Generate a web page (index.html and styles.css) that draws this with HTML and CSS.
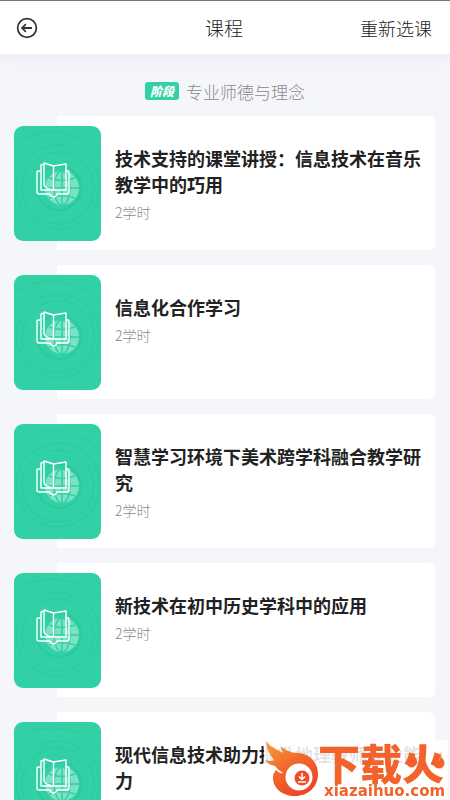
FILE: index.html
```html
<!DOCTYPE html>
<html lang="zh-CN">
<head>
<meta charset="utf-8">
<meta name="viewport" content="width=device-width, initial-scale=1">
<title>课程</title>
<link rel="stylesheet" href="styles.css">
</head>
<body>
<svg class="defs" aria-hidden="true">
  <symbol id="cover" viewBox="0 0 87 115">
    <g fill="none" stroke="#20c49b" stroke-opacity=".45">
      <circle cx="45" cy="62" r="22" stroke-width="2"/>
      <circle cx="44" cy="62" r="36"/>
      <circle cx="44" cy="61" r="42"/>
      <circle cx="38" cy="72" r="66"/>
    </g>
    <circle cx="48" cy="62" r="17" fill="#7be2c4"/>
    <g fill="none" stroke="#35d0a7" stroke-width="1.6">
      <path d="M48 45v34M31 62h34M35 52q13 5 26 0M35 72q13-5 26 0"/>
      <ellipse cx="48" cy="62" rx="8" ry="17"/>
    </g>
    <g fill="none" stroke="#fff" stroke-width="1.4" stroke-linejoin="round" stroke-linecap="round">
      <path d="M26 45h-2q-1 0-1 1v20q0 2 2 2h11q1 3 3.500 3t3.500-3h10q2 0 2-2V46q0-1-1-1h-2"/>
      <path d="M30 38l-3 1v25h25V38l-12.500 2L30 37v22q2 4 9.500 5V40"/>
    </g>
  </symbol>
</svg>
<div class="app">
  <header class="topbar">
    <button class="back" type="button" aria-label="返回">
      <svg viewBox="0 0 20 20" aria-hidden="true"><circle cx="10" cy="10" r="8.500"/><path d="M14.500 10H6M9 6.500L5.500 10L9 13.500"/></svg>
    </button>
    <h1>课程</h1>
    <a class="reselect" href="#">重新选课</a>
  </header>
  <main>
    <h2 class="stage"><span class="badge">阶段</span>专业师德与理念</h2>
    <ul class="courses">
      <li class="course"><svg class="cover" aria-hidden="true"><use href="#cover"/></svg><div class="info"><h3>技术支持的课堂讲授：信息技术在音乐教学中的巧用</h3><p>2学时</p></div></li>
      <li class="course"><svg class="cover" aria-hidden="true"><use href="#cover"/></svg><div class="info"><h3>信息化合作学习</h3><p>2学时</p></div></li>
      <li class="course"><svg class="cover" aria-hidden="true"><use href="#cover"/></svg><div class="info"><h3>智慧学习环境下美术跨学科融合教学研究</h3><p>2学时</p></div></li>
      <li class="course"><svg class="cover" aria-hidden="true"><use href="#cover"/></svg><div class="info"><h3>新技术在初中历史学科中的应用</h3><p>2学时</p></div></li>
      <li class="course"><svg class="cover" aria-hidden="true"><use href="#cover"/></svg><div class="info"><h3>现代信息技术助力提升地理教师专业能力</h3><p>2学时</p></div></li>
    </ul>
  </main>
  <aside class="brand">
    <svg class="flame" viewBox="0 0 54 58" aria-hidden="true">
      <defs><linearGradient id="fire" x1="0" y1="0" x2=".6" y2="1"><stop offset="0" stop-color="#f9a13a"/><stop offset=".5" stop-color="#f26a2c"/><stop offset="1" stop-color="#ee4526"/></linearGradient></defs>
      <path fill="url(#fire)" d="M2 1C6 7 12 9 19 13Q18 9 16 6C22 10 27 13 33 13C46 13 54 23 54 34C54 47 44 56 31 56C18 56 9 48 9 38Q9 33 12 30Q15 34 19 33Q14 30 11 26C6 25 3 23 1 20Q7 22 10 20C6 14 2 9 2 1Z"/>
      <circle cx="35" cy="37" r="13.500" fill="#fff"/>
      <circle cx="38" cy="38" r="7.500" fill="#ef4c27"/>
      <path d="M38 33v6M35 36.500l3 3 3-3M34 42h8" fill="none" stroke="#fff" stroke-width="1.500"/>
    </svg>
    <div class="wordmark">
      <strong>下载火</strong>
      <span>xiazaihuo.com</span>
    </div>
    <svg class="sparks" viewBox="0 0 38 20" aria-hidden="true"><path fill="#f2622a" d="M5 0Q6 5 9 8Q12 13 8 16Q5 19 1 16Q-1 12 2 9Q2 11 4 12Q7 7 5 0ZM34 1Q33 6 36 9Q39 13 36 17Q32 20 28 17Q26 14 29 9Q30 11 32 11Q35 6 34 1Z"/></svg>
  </aside>
</div>
</body>
</html>
```

FILE: styles.css
```css
* {
  box-sizing: border-box;
  margin: 0;
  padding: 0;
}

body {
  background: #f5f6fa;
  color: #222;
  font-family: "Noto Sans CJK SC", sans-serif;
}

.defs {
  position: absolute;
  width: 0;
  height: 0;
}

.app {
  display: flex;
  flex-direction: column;
  height: 100vh;
  overflow: hidden;
}

.topbar {
  display: grid;
  grid-template-columns: 1fr auto 1fr;
  align-items: center;
  flex: none;
  height: 54px;
  padding: 0 18px 0 16px;
  border-top: 1px solid #777;
  background: #fff;
  box-shadow: 0 4px 16px rgba(30, 40, 80, 0.05);
}

.back {
  width: 22px;
  height: 22px;
  border: 0;
  background: none;
}

.back svg {
  display: block;
  width: 22px;
  height: 22px;
  fill: none;
  stroke: #333;
  stroke-width: 1.6;
}

h1 {
  font-size: 19px;
  font-weight: 300;
}

.reselect {
  justify-self: end;
  color: #222;
  font-size: 18px;
  font-weight: 300;
  text-decoration: none;
}

main {
  flex: 1;
  min-height: 0;
  overflow-y: auto;
  scrollbar-width: none;
}

.stage {
  display: flex;
  align-items: center;
  justify-content: center;
  gap: 7px;
  height: 24px;
  margin: 25px 0 13px;
  color: #888;
  font-size: 17px;
  font-weight: 300;
}

.badge {
  width: 34px;
  height: 18px;
  border-radius: 3px;
  background: #32d0a7;
  color: #fff;
  font-size: 12px;
  font-style: italic;
  font-weight: 900;
  line-height: 18px;
  text-align: center;
}

.courses {
  display: grid;
  gap: 15px;
  padding: 0 15px 15px 14px;
  list-style: none;
}

.course {
  display: flex;
  align-items: center;
  gap: 14px;
  height: 134px;
  background: linear-gradient(#fff, #fff) right / calc(100% - 43px) 100% no-repeat;
  border-radius: 5px;
}

.cover {
  flex: none;
  width: 87px;
  height: 115px;
  border-radius: 9px;
  background: #32d0a7;
}

.info {
  flex: 1;
  align-self: flex-start;
  padding: 29px 14px 0 0;
}

h3 {
  font-size: 18px;
  font-weight: 700;
  line-height: 26px;
}

.info p {
  margin-top: 5px;
  color: #888;
  font-size: 14px;
  font-weight: 300;
  line-height: 20px;
}

.brand {
  position: fixed;
  right: 2px;
  bottom: 0;
  display: flex;
  width: 184px;
  height: 60px;
  background: rgba(255, 255, 255, 0.88);
}

.flame {
  flex: none;
  width: 54px;
  height: 58px;
}

.wordmark {
  display: flex;
  flex-direction: column;
  color: #f2622a;
}

.wordmark strong {
  font-size: 42px;
  font-weight: 900;
  line-height: 44px;
  white-space: nowrap;
}

.wordmark span {
  padding-left: 6px;
  font: bold 15px/14px "DejaVu Sans", sans-serif;
}

.sparks {
  position: absolute;
  top: 10px;
  right: 3px;
  width: 38px;
  height: 20px;
}
```
